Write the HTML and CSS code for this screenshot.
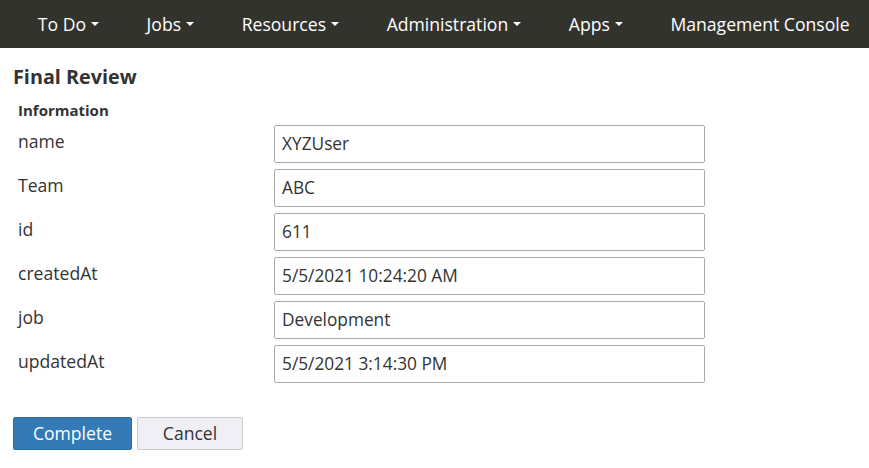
FILE: index.html
```html
<!DOCTYPE html>
<html>
<head>
<meta charset="utf-8">
<link rel="stylesheet" href="styles.css">
</head>
<body>
<nav class="navbar">
  <ul class="nav">
    <li class="nav-item">To Do <span class="caret"></span></li>
    <li class="nav-item">Jobs <span class="caret"></span></li>
    <li class="nav-item">Resources <span class="caret"></span></li>
    <li class="nav-item">Administration <span class="caret"></span></li>
    <li class="nav-item">Apps <span class="caret"></span></li>
    <li class="nav-item">Management Console</li>
  </ul>
</nav>
<main class="content">
  <h1 class="title">Final Review</h1>
  <section class="form">
    <h2 class="section-title">Information</h2>
    <div class="row"><label class="label">name</label><div class="input">XYZUser</div></div>
    <div class="row"><label class="label">Team</label><div class="input">ABC</div></div>
    <div class="row"><label class="label">id</label><div class="input">611</div></div>
    <div class="row"><label class="label">createdAt</label><div class="input">5/5/2021 10:24:20 AM</div></div>
    <div class="row"><label class="label">job</label><div class="input">Development</div></div>
    <div class="row"><label class="label">updatedAt</label><div class="input">5/5/2021 3:14:30 PM</div></div>
  </section>
  <div class="actions">
    <button class="btn btn-primary">Complete</button>
    <button class="btn btn-default">Cancel</button>
  </div>
</main>
</body>
</html>
```

FILE: styles.css
```css
* { box-sizing: border-box; }
html, body { margin: 0; padding: 0; }
body {
  font-family: "Open Sans", "Noto Sans", sans-serif;
  color: #333;
  background: #fff;
}
.navbar {
  background: #33332e;
  height: 48px;
}
.nav {
  list-style: none;
  margin: 0;
  padding: 0 0 0 14px;
  display: flex;
  height: 48px;
  align-items: center;
}
.nav-item {
  color: #fff;
  font-size: 17.6px;
  padding: 0 23.8px;
  white-space: nowrap;
  display: flex;
  align-items: center;
}
.caret {
  display: inline-block;
  width: 0;
  height: 0;
  margin-left: 5px;
  border-top: 4px solid #fff;
  border-left: 4px solid transparent;
  border-right: 4px solid transparent;
}
.content {
  padding: 0 13px;
}
.title {
  font-size: 19.8px;
  font-weight: 700;
  margin: 15px 0 0 0;
  line-height: 28px;
}
.form {
  padding-left: 5px;
}
.section-title {
  font-size: 15px;
  font-weight: 700;
  margin: 9px 0 0 0;
  line-height: 21px;
}
.row {
  display: flex;
  align-items: flex-start;
  margin-top: 6px;
  height: 38px;
}
.section-title + .row { margin-top: 4px; }
.label {
  width: 256px;
  font-size: 17.6px;
  line-height: 24px;
  padding-top: 4px;
}
.input {
  width: 431px;
  height: 38px;
  border: 1px solid #aaa;
  border-radius: 2px;
  padding: 0 7px;
  font-size: 17.3px;
  line-height: 36px;
}
.actions {
  margin-top: 34px;
  display: flex;
  gap: 5px;
}
.btn {
  font-family: "Open Sans", "Noto Sans", sans-serif;
  font-size: 17.6px;
  height: 33px;
  border-radius: 2px;
  padding: 0;
  line-height: 31px;
  cursor: pointer;
  text-align: center;
}
.btn-primary {
  background: #337ab7;
  border: 1px solid #2e6da4;
  color: #fff;
  width: 119px;
}
.btn-default {
  background: #efeff5;
  border: 1px solid #ccc;
  color: #333;
  width: 106px;
}
```
